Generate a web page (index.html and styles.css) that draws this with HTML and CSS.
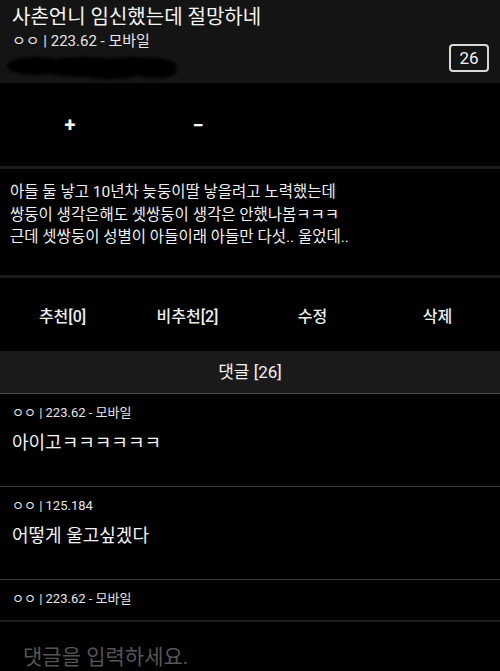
FILE: index.html
```html
<!DOCTYPE html>
<html lang="ko">
<head>
<meta charset="UTF-8">
<meta name="viewport" content="width=device-width, initial-scale=1.0">
<title>사촌언니 임신했는데 절망하네</title>
<link rel="stylesheet" href="styles.css">
</head>
<body>
<div class="page">
  <div class="post-head">
    <div class="head-left">
      <h1 class="title">사촌언니 임신했는데 절망하네</h1>
      <div class="head-meta">ㅇㅇ | 223.62 - 모바일</div>
      <svg class="scribble" width="176" height="28" viewBox="0 0 176 28">
        <defs>
          <filter id="soft"><feGaussianBlur stdDeviation="1.6"/></filter>
        </defs>
        <g fill="#030303" filter="url(#soft)">
          <ellipse cx="30" cy="13" rx="28" ry="9"/>
          <ellipse cx="80" cy="14" rx="50" ry="10"/>
          <ellipse cx="130" cy="12" rx="42" ry="8"/>
          <ellipse cx="150" cy="18" rx="22" ry="7"/>
          <ellipse cx="105" cy="20" rx="30" ry="6"/>
        </g>
      </svg>
    </div>
    <div class="head-right">
      <span class="count-badge">26</span>
    </div>
  </div>

  <div class="zoom-row">
    <span class="zoom-btn">+</span>
    <span class="zoom-btn">&minus;</span>
  </div>

  <div class="post-body">
    아들 둘 낳고 10년차 늦둥이딸 낳을려고 노력했는데<br>
    쌍둥이 생각은해도 셋쌍둥이 생각은 안했나봄ㅋㅋㅋ<br>
    근데 셋쌍둥이 성별이 아들이래 아들만 다섯.. 울었데..
  </div>

  <div class="actions">
    <span class="action">추천[0]</span>
    <span class="action">비추천[2]</span>
    <span class="action">수정</span>
    <span class="action">삭제</span>
  </div>

  <div class="comment-bar">댓글 [26]</div>

  <div class="comment">
    <div class="comment-meta">ㅇㅇ | 223.62 - 모바일</div>
    <div class="comment-text">아이고ㅋㅋㅋㅋㅋㅋ</div>
  </div>
  <div class="comment">
    <div class="comment-meta">ㅇㅇ | 125.184</div>
    <div class="comment-text">어떻게 울고싶겠다</div>
  </div>
  <div class="comment">
    <div class="comment-meta">ㅇㅇ | 223.62 - 모바일</div>
  </div>
</div>

<div class="reply-box">
  <span class="placeholder">댓글을 입력하세요.</span>
</div>
</body>
</html>
```

FILE: styles.css
```css
html, body {
  margin: 0;
  padding: 0;
  background: #000;
  height: 100%;
  overflow: hidden;
}
body {
  font-family: Roboto, "Noto Sans CJK KR", sans-serif;
  color: #f2f2f2;
}
.post-head {
  display: flex;
  justify-content: space-between;
  background: #141414;
  height: 83px;
  padding: 0 11px 0 5px;
  box-sizing: border-box;
}
.head-left {
  display: flex;
  flex-direction: column;
}
.title {
  margin: 0;
  padding: 4px 0 0 7px;
  font-size: 20px;
  font-weight: 400;
  line-height: 26px;
  color: #f4f4f4;
}
.head-meta {
  padding-left: 7px;
  font-size: 15px;
  line-height: 22px;
  color: #e8e8e8;
}
.scribble {
  display: block;
  margin-top: 1px;
}
.head-right {
  display: flex;
  align-items: flex-end;
  padding-bottom: 11px;
}
.count-badge {
  display: inline-block;
  width: 36px;
  height: 24px;
  line-height: 24px;
  border: 2px solid #d8d8d8;
  border-radius: 4px;
  text-align: center;
  font-size: 17px;
  color: #f2f2f2;
}
.zoom-row {
  display: flex;
  height: 83px;
  padding-left: 6px;
  align-items: center;
  border-bottom: 3px solid #1b1b1b;
}
.zoom-btn {
  width: 128px;
  text-align: center;
  font-size: 20px;
  font-weight: 700;
  color: #fff;
}
.post-body {
  height: 109px;
  padding: 12px 10px 0;
  box-sizing: border-box;
  font-size: 15.5px;
  line-height: 22.5px;
  color: #f0f0f0;
  border-bottom: 3px solid #1b1b1b;
}
.actions {
  display: flex;
  height: 73px;
  align-items: center;
}
.action {
  flex: 1;
  text-align: center;
  font-size: 16px;
  font-weight: 500;
  color: #ececec;
  padding-top: 1px;
}
.comment-bar {
  height: 42px;
  line-height: 42px;
  background: #1a1a1a;
  text-align: center;
  font-size: 17px;
  color: #f2f2f2;
  border-bottom: 1px solid #4a4a4a;
}
.comment {
  padding: 9px 12px 0;
  height: 93px;
  box-sizing: border-box;
  border-bottom: 1px solid #3a3a3a;
}
.comment-meta {
  font-size: 13px;
  line-height: 20px;
  color: #e6e6e6;
}
.comment-text {
  margin-top: 7px;
  font-size: 18px;
  line-height: 26px;
  color: #f4f4f4;
}
.reply-box {
  position: fixed;
  left: 0;
  right: 0;
  bottom: 0;
  height: 49px;
  background: #000;
  border-top: 2px solid #1e1e1e;
  padding-left: 23px;
  display: flex;
  align-items: center;
}
.placeholder {
  font-size: 21px;
  color: #555;
  padding-top: 16px;
}
```
